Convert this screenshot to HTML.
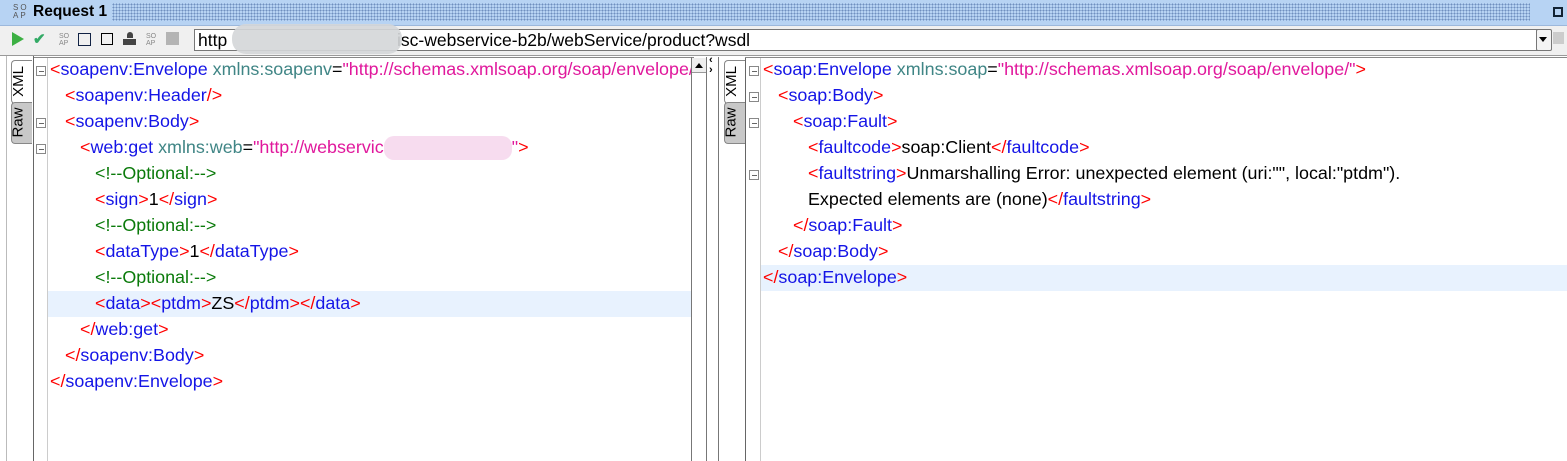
<!DOCTYPE html><html><head><style>
body{margin:0;width:1567px;height:461px;overflow:hidden;background:#fff;font-family:"Liberation Sans",Arial,sans-serif;position:relative}
.a{position:absolute}
.code{font-size:17.9px;line-height:26px}
.code div{height:26px;white-space:pre}
.i1{padding-left:15px}.i2{padding-left:30px}.i3{padding-left:45px}
.r{color:#f00}.b{color:#1414e6}.t{color:#3f8585}.m{color:#e0189c}.g{color:#0a7a0a}.k{color:#000}
.tab{position:absolute;width:20px;border:1px solid #888;border-right:none;border-radius:4px 0 0 4px;font-size:15px}
.tab span{position:absolute;transform:rotate(-90deg);transform-origin:center;white-space:nowrap}
.fold{position:absolute;width:8px;height:8px;border:1px solid #888;background:#fff}
.fold:after{content:"";position:absolute;left:2px;top:4px;width:5px;height:1px;background:#666}
</style></head><body>
<div class="a" style="left:0;top:0;width:1567px;height:25px;background:#b7d3f3;border-bottom:1px solid #9cb8dc"></div>
<div class="a" style="left:112px;top:3px;width:1418px;height:18px;background-image:radial-gradient(#6f8fbf 0.8px,transparent 1px);background-size:3px 3px"></div>
<div class="a" style="left:13px;top:4px;font-size:8px;line-height:8px;color:#555;letter-spacing:2px">SO<br>AP</div>
<div class="a" style="left:33px;top:3px;font-size:15.5px;font-weight:bold">Request 1</div>
<div class="a" style="left:1553px;top:7px;width:6px;height:6px;border:2px solid #123"></div>
<div class="a" style="left:0;top:26px;width:1567px;height:30px;background:#f0f0f0"></div>
<div class="a" style="left:12px;top:32px;width:0;height:0;border-left:12px solid #3cb043;border-top:7px solid transparent;border-bottom:7px solid transparent"></div>
<div class="a" style="left:33px;top:30px;font-size:15px;color:#3a6;font-weight:bold">✔</div>
<div class="a" style="left:59px;top:33px;font-size:7px;line-height:7px;color:#888">SO<br>AP</div>
<div class="a" style="left:78px;top:33px;width:11px;height:11px;border:1px solid #124;"></div>
<div class="a" style="left:101px;top:33px;width:10px;height:10px;border:1px solid #000"></div>
<div class="a" style="left:127px;top:32px;width:6px;height:6px;background:#444;border-radius:3px 3px 0 0"></div>
<div class="a" style="left:123px;top:39px;width:13px;height:6px;background:#444"></div>
<div class="a" style="left:146px;top:33px;font-size:7px;line-height:7px;color:#888">SO<br>AP</div>
<div class="a" style="left:166px;top:32px;width:13px;height:13px;background:#b4b4b4"></div>
<div class="a" style="left:194px;top:29px;width:1343px;height:20px;border:1px solid #777;background:#fff"></div>
<div class="a" style="left:198px;top:30px;font-size:17.5px;line-height:20px">http</div>
<div class="a" style="left:397px;top:30px;font-size:17.5px;line-height:20px;white-space:pre">isc-webservice-b2b/webService/product?wsdl</div>
<div class="a" style="left:232px;top:24px;width:170px;height:30px;background:#d4d6d8;border-radius:14px;opacity:.9"></div>
<div class="a" style="left:1536px;top:29px;width:14px;height:20px;border:1px solid #777;border-radius:2px;background:#f4f4f4"></div>
<div class="a" style="left:1539px;top:37px;border-left:4px solid transparent;border-right:4px solid transparent;border-top:5px solid #000"></div>
<div class="a" style="left:1553px;top:32px;width:11px;height:12px;background:#ccc"></div>
<div class="a" style="left:0;top:55px;width:1567px;height:1px;background:#999"></div>
<div class="a" style="left:6px;top:56px;width:1px;height:405px;background:#bbb"></div>
<div class="a" style="left:33px;top:56px;width:1px;height:405px;background:#666"></div>
<div class="a" style="left:47px;top:58px;width:1px;height:403px;background:#ccc"></div>
<div class="a" style="left:34px;top:57px;width:660px;height:1px;background:#888"></div>
<div class="tab" style="left:11px;top:60px;height:42px;background:#fff"><span style="left:-9px;top:12px">XML</span></div>
<div class="tab" style="left:11px;top:102px;height:40px;background:#c8c8c8"><span style="left:-9px;top:11px">Raw</span></div>
<div class="a" style="left:691px;top:57px;width:1px;height:404px;background:#777"></div>
<div class="a" style="left:692px;top:58px;width:14px;height:14px;background:#eee;border-bottom:1px solid #999"></div>
<div class="a" style="left:695px;top:63px;border-left:4px solid transparent;border-right:4px solid transparent;border-bottom:5px solid #000"></div>
<div class="a" style="left:706px;top:57px;width:1px;height:404px;background:#777"></div>
<div class="a" style="left:709px;top:55px;font-size:11px;line-height:10px;font-weight:bold">‹<br>›</div>
<div class="a" style="left:718px;top:57px;width:1px;height:404px;background:#777"></div>
<div class="a" style="left:745px;top:57px;width:1px;height:404px;background:#666"></div>
<div class="a" style="left:760px;top:58px;width:1px;height:403px;background:#ccc"></div>
<div class="a" style="left:745px;top:57px;width:822px;height:1px;background:#888"></div>
<div class="tab" style="left:724px;top:60px;height:42px;background:#fff"><span style="left:-9px;top:12px">XML</span></div>
<div class="tab" style="left:724px;top:102px;height:40px;background:#c8c8c8"><span style="left:-9px;top:11px">Raw</span></div>
<div class="a" style="left:48px;top:291px;width:643px;height:26px;background:#e8f2fe"></div>
<div class="a" style="left:761px;top:265px;width:806px;height:26px;background:#e8f2fe"></div>
<div class="fold" style="left:36px;top:66px"></div><div class="fold" style="left:36px;top:118px"></div><div class="fold" style="left:36px;top:144px"></div>
<div class="fold" style="left:749px;top:66px"></div><div class="fold" style="left:749px;top:92px"></div><div class="fold" style="left:749px;top:118px"></div><div class="fold" style="left:749px;top:170px"></div>
<div class="a code" style="left:50px;top:56px;width:641px;overflow:hidden"><div><span class="r">&lt;</span><span class="b">soapenv:Envelope </span><span class="t">xmlns:soapenv</span><span class="k">=</span><span class="m">"http://schemas.xmlsoap.org/soap/envelope/"</span></div><div class="i1"><span class="r">&lt;</span><span class="b">soapenv:Header</span><span class="r">/&gt;</span></div><div class="i1"><span class="r">&lt;</span><span class="b">soapenv:Body</span><span class="r">&gt;</span></div><div class="i2"><span class="r">&lt;</span><span class="b">web:get </span><span class="t">xmlns:web</span><span class="k">=</span><span class="m">"http://webservic<span style="display:inline-block;width:128px;height:24px;vertical-align:middle;background:#f6d6ec;border-radius:10px;opacity:.85"></span>"</span><span class="r">&gt;</span></div><div class="i3"><span class="g">&lt;!--Optional:--&gt;</span></div><div class="i3"><span class="r">&lt;</span><span class="b">sign</span><span class="r">&gt;</span>1<span class="r">&lt;/</span><span class="b">sign</span><span class="r">&gt;</span></div><div class="i3"><span class="g">&lt;!--Optional:--&gt;</span></div><div class="i3"><span class="r">&lt;</span><span class="b">dataType</span><span class="r">&gt;</span>1<span class="r">&lt;/</span><span class="b">dataType</span><span class="r">&gt;</span></div><div class="i3"><span class="g">&lt;!--Optional:--&gt;</span></div><div class="i3"><span class="r">&lt;</span><span class="b">data</span><span class="r">&gt;&lt;</span><span class="b">ptdm</span><span class="r">&gt;</span>ZS<span class="r">&lt;/</span><span class="b">ptdm</span><span class="r">&gt;&lt;/</span><span class="b">data</span><span class="r">&gt;</span></div><div class="i2"><span class="r">&lt;/</span><span class="b">web:get</span><span class="r">&gt;</span></div><div class="i1"><span class="r">&lt;/</span><span class="b">soapenv:Body</span><span class="r">&gt;</span></div><div><span class="r">&lt;/</span><span class="b">soapenv:Envelope</span><span class="r">&gt;</span></div></div>
<div class="a code" style="left:763px;top:56px"><div><span class="r">&lt;</span><span class="b">soap:Envelope </span><span class="t">xmlns:soap</span><span class="k">=</span><span class="m">"http://schemas.xmlsoap.org/soap/envelope/"</span><span class="r">&gt;</span></div><div class="i1"><span class="r">&lt;</span><span class="b">soap:Body</span><span class="r">&gt;</span></div><div class="i2"><span class="r">&lt;</span><span class="b">soap:Fault</span><span class="r">&gt;</span></div><div class="i3"><span class="r">&lt;</span><span class="b">faultcode</span><span class="r">&gt;</span>soap:Client<span class="r">&lt;/</span><span class="b">faultcode</span><span class="r">&gt;</span></div><div class="i3"><span class="r">&lt;</span><span class="b">faultstring</span><span class="r">&gt;</span>Unmarshalling Error: unexpected element (uri:"", local:"ptdm").</div><div class="i3">Expected elements are (none)<span class="r">&lt;/</span><span class="b">faultstring</span><span class="r">&gt;</span></div><div class="i2"><span class="r">&lt;/</span><span class="b">soap:Fault</span><span class="r">&gt;</span></div><div class="i1"><span class="r">&lt;/</span><span class="b">soap:Body</span><span class="r">&gt;</span></div><div><span class="r">&lt;/</span><span class="b">soap:Envelope</span><span class="r">&gt;</span></div></div>
</body></html>
